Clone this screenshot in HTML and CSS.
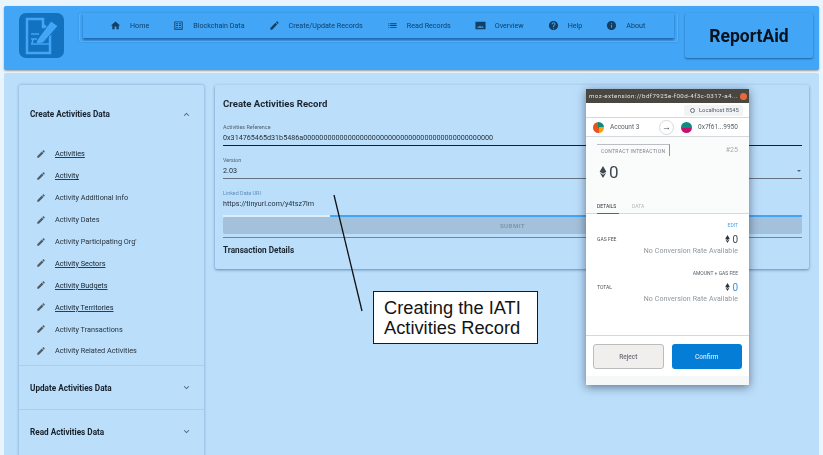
FILE: index.html
```html
<!DOCTYPE html>
<html lang="en">

<head>
    <meta charset="UTF-8">
    <meta name="viewport" content="width=device-width, initial-scale=1.0">
    <title>ReportAid</title>
    <link rel="stylesheet" href="styles.css">
</head>

<body>
    <svg class="defs" width="0" height="0">
        <symbol id="i-home" viewBox="0 0 24 24"><path d="M10 20v-6h4v6h5v-8h3L12 3 2 12h3v8z"/></symbol>
        <symbol id="i-edit" viewBox="0 0 24 24"><path d="M3 17.25V21h3.75L17.81 9.94l-3.75-3.75L3 17.25zM20.71 7.04c.39-.39.39-1.02 0-1.41l-2.34-2.34c-.39-.39-1.02-.39-1.41 0l-1.83 1.83 3.75 3.75 1.83-1.83z"/></symbol>
        <symbol id="i-grid" viewBox="0 0 24 24"><path d="M3 3h18v18H3V3zm2 2v14h14V5H5zm2 2h4v2H7V7zm6 0h4v2h-4V7zm-6 4h4v2H7v-2zm6 0h4v2h-4v-2zm-6 4h4v2H7v-2zm6 0h4v2h-4v-2z"/></symbol>
        <symbol id="i-list" viewBox="0 0 24 24"><path d="M3 13h2v-2H3v2zm0 4h2v-2H3v2zm0-8h2V7H3v2zm4 4h14v-2H7v2zm0 4h14v-2H7v2zM7 7v2h14V7H7z"/></symbol>
        <symbol id="i-photo" viewBox="0 0 24 24"><path d="M1 4h22v16H1V4zm4 13h14l-3-4-2.500 2.500L11 12l-3 3-1.500-1.500L5 17z"/></symbol>
        <symbol id="i-help" viewBox="0 0 24 24"><path d="M12 2C6.48 2 2 6.48 2 12s4.48 10 10 10 10-4.48 10-10S17.52 2 12 2zm1 17h-2v-2h2v2zm2.070-7.750l-.9.920C13.450 12.900 13 13.500 13 15h-2v-.5c0-1.100.45-2.100 1.170-2.830l1.240-1.260c.37-.36.59-.86.59-1.410 0-1.100-.9-2-2-2s-2 .9-2 2H8c0-2.210 1.790-4 4-4s4 1.790 4 4c0 .88-.36 1.680-.93 2.250z"/></symbol>
        <symbol id="i-info" viewBox="0 0 24 24"><path d="M12 2C6.480 2 2 6.480 2 12s4.480 10 10 10 10-4.480 10-10S17.520 2 12 2zm1 15h-2v-6h2v6zm0-8h-2V7h2v2z"/></symbol>
        <symbol id="i-up" viewBox="0 0 24 24"><path d="M12 8l-6 6 1.410 1.410L12 10.830l4.590 4.580L18 14z"/></symbol>
        <symbol id="i-down" viewBox="0 0 24 24"><path d="M16.590 8.590L12 13.170 7.410 8.590 6 10l6 6 6-6z"/></symbol>
        <symbol id="i-eth" viewBox="0 0 10 16"><path d="M5 0l4.500 7.600L5 10.200.5 7.600 5 0zM.8 9L5 11.500 9.200 9 5 16 .8 9z"/></symbol>
    </svg>

    <header class="topbar">
        <div class="logo">
            <svg viewBox="0 0 45 45" width="45" height="45">
                <rect width="45" height="45" rx="7" fill="#1372bf"/>
                <path d="M8 6h16v8h7v26H8z" fill="none" stroke="#42a5f5" stroke-width="2.500"/>
                <path d="M24 10l5 5h-5z" fill="#42a5f5"/>
                <path d="M18 27l14-19 7 5-15 17-7 1z" fill="#42a5f5" stroke="#1372bf" stroke-width="1"/>
                <path d="M12 21h8M12 26h6M12 31h20M14 26l-1 5" stroke="#42a5f5" stroke-width="1.500" fill="none"/>
            </svg>
        </div>
        <div class="nav-wrap">
            <nav class="nav">
                <a class="nav-item"><svg><use href="#i-home"/></svg>Home</a>
                <a class="nav-item"><svg><use href="#i-grid"/></svg>Blockchain Data</a>
                <a class="nav-item"><svg><use href="#i-edit"/></svg>Create/Update Records</a>
                <a class="nav-item"><svg><use href="#i-list"/></svg>Read Records</a>
                <a class="nav-item"><svg><use href="#i-photo"/></svg>Overview</a>
                <a class="nav-item"><svg><use href="#i-help"/></svg>Help</a>
                <a class="nav-item"><svg><use href="#i-info"/></svg>About</a>
            </nav>
        </div>
        <div class="brand">ReportAid</div>
    </header>

    <main class="content">
        <aside class="side">
            <div class="side-head open">Create Activities Data<svg><use href="#i-up"/></svg></div>
            <ul class="side-list">
                <li><svg><use href="#i-edit"/></svg><a class="link">Activities</a></li>
                <li><svg><use href="#i-edit"/></svg><a class="link">Activity</a></li>
                <li><svg><use href="#i-edit"/></svg><a>Activity Additional Info</a></li>
                <li><svg><use href="#i-edit"/></svg><a>Activity Dates</a></li>
                <li><svg><use href="#i-edit"/></svg><a>Activity Participating Org'</a></li>
                <li><svg><use href="#i-edit"/></svg><a class="link">Activity Sectors</a></li>
                <li><svg><use href="#i-edit"/></svg><a class="link">Activity Budgets</a></li>
                <li><svg><use href="#i-edit"/></svg><a class="link">Activity Territories</a></li>
                <li><svg><use href="#i-edit"/></svg><a>Activity Transactions</a></li>
                <li><svg><use href="#i-edit"/></svg><a>Activity Related Activities</a></li>
            </ul>
            <div class="side-head">Update Activities Data<svg><use href="#i-down"/></svg></div>
            <div class="side-head">Read Activities Data<svg><use href="#i-down"/></svg></div>
        </aside>

        <section class="card">
            <h2>Create Activities Record</h2>
            <div class="field dark">
                <label>Activities Reference</label>
                <div class="value">0x314765465d31b5486a00000000000000000000000000000000000000000000000</div>
            </div>
            <div class="field">
                <label>Version</label>
                <div class="value">2.03</div>
                <i class="caret"></i>
            </div>
            <div class="field focus">
                <label>Linked Data URI</label>
                <div class="value">https://tinyurl.com/y4tsz7lm</div>
            </div>
            <button class="submit">SUBMIT</button>
            <div class="card-foot">Transaction Details</div>
        </section>
    </main>

    <svg class="pointer" width="40" height="125"><path d="M3 2l28 116" stroke="#111" stroke-width="1.300"/></svg>
    <div class="note">Creating the IATI<br>Activities Record</div>

    <div class="popup">
        <div class="popup-title"><span>moz-extension://bdf7925e-f00d-4f3c-0317-a4...</span><i class="close"></i></div>
        <div class="network"><span class="pill"><b class="globe"></b>Localhost 8545</span></div>
        <div class="accounts">
            <span class="avatar a1"></span><span class="acct">Account 3</span>
            <span class="arrow">&#8594;</span>
            <span class="avatar a2"></span><span class="acct">0x7f61...9950</span>
        </div>
        <div class="summary">
            <div class="summary-top"><span class="action">CONTRACT INTERACTION</span><span class="nonce">#25</span></div>
            <div class="amount"><svg><use href="#i-eth"/></svg>0</div>
            <div class="tabs"><span class="tab on">DETAILS</span><span class="tab">DATA</span></div>
        </div>
        <div class="details">
            <div class="edit">EDIT</div>
            <div class="fee-row"><span>GAS FEE</span><span class="eth"><svg><use href="#i-eth"/></svg>0</span></div>
            <div class="rate">No Conversion Rate Available</div>
            <div class="fee-sub">AMOUNT + GAS FEE</div>
            <div class="fee-row"><span>TOTAL</span><span class="eth total"><svg><use href="#i-eth"/></svg>0</span></div>
            <div class="rate">No Conversion Rate Available</div>
        </div>
        <div class="actions">
            <button class="reject">Reject</button>
            <button class="confirm">Confirm</button>
        </div>
        <div class="popup-foot"></div>
    </div>
</body>

</html>
```

FILE: styles.css
```css
* {
    margin: 0;
    padding: 0;
    box-sizing: border-box;
    font-family: 'Roboto', sans-serif;
}

html,
body {
    width: 823px;
    height: 455px;
    overflow: hidden;
}

body {
    background-color: #eaf4fc;
    padding: 6px 4px 0;
    color: #1f2a33;
}

.defs {
    position: absolute;
}

/* the reference is a soft, scaled down capture */
.topbar,
.content,
.popup {
    filter: blur(0.35px);
}

/* top bar */
.topbar {
    height: 64px;
    background-color: #42a5f5;
    border-radius: 2px;
    box-shadow: 0 1px 2px rgba(0, 0, 0, 0.35);
    padding: 7px 6px 0 15px;
    display: flex;
    align-items: flex-start;
}

.logo {
    width: 45px;
    height: 45px;
    margin-right: 15px;
}

.nav-wrap {
    width: 599px;
    height: 29px;
    padding: 0 3px;
    margin-right: 7px;
    border: 1px solid #5bb0f3;
    border-top: 0;
    border-radius: 3px;
    box-shadow: 0 0 2px rgba(20, 90, 160, 0.35);
}

.nav {
    height: 25px;
    padding-left: 27px;
    display: flex;
    align-items: center;
    gap: 24px;
    box-shadow: 0 2px 2px rgba(15, 70, 130, 0.65);
}

.nav-item {
    display: flex;
    align-items: center;
    gap: 9px;
    font-size: 7.150px;
    color: #123f66;
    white-space: nowrap;
}

.nav-item svg {
    width: 11px;
    height: 11px;
    fill: #123f66;
}

.brand {
    width: 128px;
    height: 45px;
    font-size: 17.500px;
    font-weight: 700;
    color: #07121c;
    display: flex;
    align-items: center;
    justify-content: center;
    border-radius: 2px;
    box-shadow: 0 1px 2px rgba(15, 70, 130, 0.7);
}

/* content */
.content {
    height: 400px;
    margin-top: 3px;
    background-color: #bbdefb;
    border-radius: 2px;
    padding: 12px 10px 0 15px;
    display: flex;
    align-items: flex-start;
    gap: 11px;
}

.side {
    width: 185px;
    height: 372px;
    flex-shrink: 0;
    border-radius: 2px;
    box-shadow: 0 0 3px rgba(20, 80, 130, 0.45);
}

.side-head {
    height: 44px;
    padding: 0 12px 0 11px;
    display: flex;
    align-items: center;
    justify-content: space-between;
    font-size: 8.200px;
    font-weight: 700;
    color: #16212b;
    border-top: 1px solid #a9cfee;
}

.side-head.open {
    height: 58px;
    border-top: 0;
}

.side-head svg {
    width: 11px;
    height: 11px;
    fill: #4f6272;
}

.side-list {
    list-style: none;
    height: 222px;
    padding-left: 17px;
}

.side-list li {
    height: 21.900px;
    display: flex;
    align-items: center;
    gap: 9px;
    font-size: 7.300px;
    color: #26323c;
}

.side-list svg {
    width: 10px;
    height: 10px;
    fill: #515d67;
}

.link {
    color: #14202a;
    text-decoration: underline;
    text-decoration-color: #1033c8;
}

.card {
    width: 594px;
    height: 184px;
    padding: 0 7px 0 8px;
    border-radius: 2px;
    box-shadow: 0 1px 3px rgba(20, 70, 120, 0.55);
}

.card h2 {
    height: 38px;
    line-height: 38px;
    font-size: 9.600px;
    font-weight: 700;
    color: #1b2630;
}

.field {
    position: relative;
    height: 33px;
    padding-top: 10px;
    border-bottom: 1px solid #66737e;
}

.field label {
    display: block;
    height: 9px;
    line-height: 9px;
    font-size: 5.400px;
    color: #51616e;
}

.field .value {
    height: 12px;
    line-height: 12px;
    font-size: 7.200px;
    color: #25313b;
    white-space: nowrap;
}

.field.dark {
    height: 23px;
    padding-top: 0;
    border-bottom: 1.500px solid #1a1f24;
}

.field.focus {
    height: 38px;
    border-bottom: 2px solid #42a5f5;
}

.field.focus label {
    color: #5e90bb;
}

.field.focus::after {
    content: "";
    position: absolute;
    left: 0;
    bottom: -2px;
    width: 107px;
    height: 2px;
    background-color: #dcecf9;
}

.caret {
    position: absolute;
    right: 1px;
    top: 24px;
    border: 2.500px solid transparent;
    border-top-color: #55626d;
}

.submit {
    display: block;
    width: 100%;
    height: 17px;
    border: 0;
    border-radius: 2px;
    background-color: #a3c1da;
    color: #7f97ab;
    font-size: 6.200px;
    font-weight: 700;
    letter-spacing: 0.4px;
}

.card-foot {
    margin-top: 3px;
    height: 27px;
    line-height: 25px;
    border-top: 1px solid #77838d;
    font-size: 8.200px;
    font-weight: 700;
    color: #1b2630;
}

/* annotation */
.pointer {
    position: absolute;
    left: 331px;
    top: 193px;
}

.note {
    position: absolute;
    left: 373px;
    top: 291px;
    width: 165px;
    height: 53px;
    padding: 6px 0 0 10px;
    background-color: #fff;
    border: 1.500px solid #1a1a1a;
    font-family: 'Liberation Sans', sans-serif;
    font-size: 18.300px;
    line-height: 20px;
    color: #141414;
    white-space: nowrap;
}

/* wallet popup */
.popup {
    position: absolute;
    left: 586px;
    top: 89px;
    width: 163px;
    height: 296px;
    background-color: #fff;
    box-shadow: 0 2px 9px rgba(20, 30, 50, 0.55);
    display: flex;
    flex-direction: column;
    font-size: 6px;
    color: #5b6670;
}

.popup-title {
    height: 14px;
    padding: 0 2px 0 3px;
    background-color: #4a4640;
    color: #e4e2df;
    font-size: 6.200px;
    letter-spacing: 0.42px;
    display: flex;
    align-items: center;
    justify-content: space-between;
    white-space: nowrap;
}

.close {
    width: 7px;
    height: 7px;
    border-radius: 50%;
    background-color: #e8693a;
    flex-shrink: 0;
}

.network {
    height: 15px;
    display: flex;
    justify-content: flex-end;
    align-items: center;
    padding-right: 6px;
    border-bottom: 1px solid #d6d9dc;
}

.pill {
    height: 11px;
    width: 59px;
    background-color: #f2f3f4;
    border-radius: 2px;
    display: flex;
    align-items: center;
    gap: 4px;
    padding-left: 6px;
    font-size: 5.800px;
    color: #555f68;
    white-space: nowrap;
}

.globe {
    width: 5px;
    height: 5px;
    border-radius: 50%;
    border: 1.500px solid #6a747c;
    flex-shrink: 0;
}

.accounts {
    height: 19px;
    display: flex;
    align-items: center;
    padding-left: 7px;
    border-bottom: 1px solid #d6d9dc;
    font-size: 6.500px;
    color: #555f68;
    white-space: nowrap;
}

.avatar {
    width: 11px;
    height: 11px;
    border-radius: 50%;
    flex-shrink: 0;
}

.a1 {
    background: conic-gradient(#0f8a78 0 25%, #f5a011 25% 50%, #e8541c 50% 100%);
}

.a2 {
    background: linear-gradient(#0b8d82 50%, #c4126e 50%);
    margin-right: 6px;
}

.acct:nth-child(2) {
    margin-left: 6px;
    width: 49px;
}

.arrow {
    width: 15px;
    height: 15px;
    border: 1px solid #d6d9dc;
    border-radius: 50%;
    background-color: #fff;
    text-align: center;
    line-height: 12px;
    font-size: 9px;
    color: #4b555e;
    margin-right: 7px;
    flex-shrink: 0;
}

.summary {
    height: 77px;
    background-color: #fafbfb;
    padding: 7px 11px 0;
    border-bottom: 1px solid #d6d9dc;
}

.summary-top {
    display: flex;
    justify-content: space-between;
    align-items: flex-start;
}

.action {
    height: 12px;
    line-height: 12px;
    padding: 0 4px;
    border-top: 1px solid #b9bfc5;
    border-right: 1px solid #8f969c;
    font-size: 5px;
    letter-spacing: 0.3px;
    color: #7b848c;
    white-space: nowrap;
}

.nonce {
    font-size: 7px;
    color: #a3aab0;
    line-height: 12px;
}

.amount {
    height: 20px;
    margin-top: 6px;
    display: flex;
    align-items: center;
    gap: 2px;
    padding-left: 2px;
    font-size: 17px;
    color: #3f4850;
}

.amount svg {
    width: 8px;
    height: 12px;
    fill: #3f4850;
}

.tabs {
    margin-top: 19px;
    display: flex;
    gap: 13px;
    font-size: 5px;
    color: #b0b6bb;
}

.tab {
    height: 13px;
    line-height: 11px;
}

.tab.on {
    color: #2b343c;
    width: 22px;
    border-bottom: 1.500px solid #037dd6;
}

.details {
    flex: 1;
    padding: 8px 11px 0;
    border-bottom: 1px solid #d6d9dc;
}

.edit,
.fee-sub {
    text-align: right;
    height: 7px;
    line-height: 7px;
    font-size: 5px;
}

.edit {
    color: #4aa3e4;
}

.fee-sub {
    margin-top: 14px;
    color: #56606a;
}

.fee-row {
    margin-top: 4px;
    height: 12px;
    display: flex;
    justify-content: space-between;
    align-items: center;
    font-size: 5px;
    color: #4a545d;
}

.eth {
    display: flex;
    align-items: center;
    gap: 2px;
    font-size: 10px;
    color: #3f4850;
}

.eth.total {
    color: #3a94dc;
}

.eth svg {
    width: 5px;
    height: 8px;
    fill: #2e363d;
}

.rate {
    margin-top: 1px;
    height: 10px;
    line-height: 10px;
    text-align: right;
    font-size: 7px;
    letter-spacing: 0.1px;
    color: #8f979e;
    white-space: nowrap;
}

.actions {
    height: 40px;
    padding: 8px 7px 0;
    display: flex;
    gap: 8px;
}

.actions button {
    width: 71px;
    height: 25px;
    border-radius: 3px;
    font-size: 6.500px;
    font-weight: 500;
}

.reject {
    background-color: #f0efed;
    border: 1px solid #bbbcbc;
    color: #6c6f78;
}

.confirm {
    background-color: #037dd6;
    border: 0;
    color: #cfe6f7;
}

.popup-foot {
    height: 9px;
    background-color: #f6f7f7;
}
```
